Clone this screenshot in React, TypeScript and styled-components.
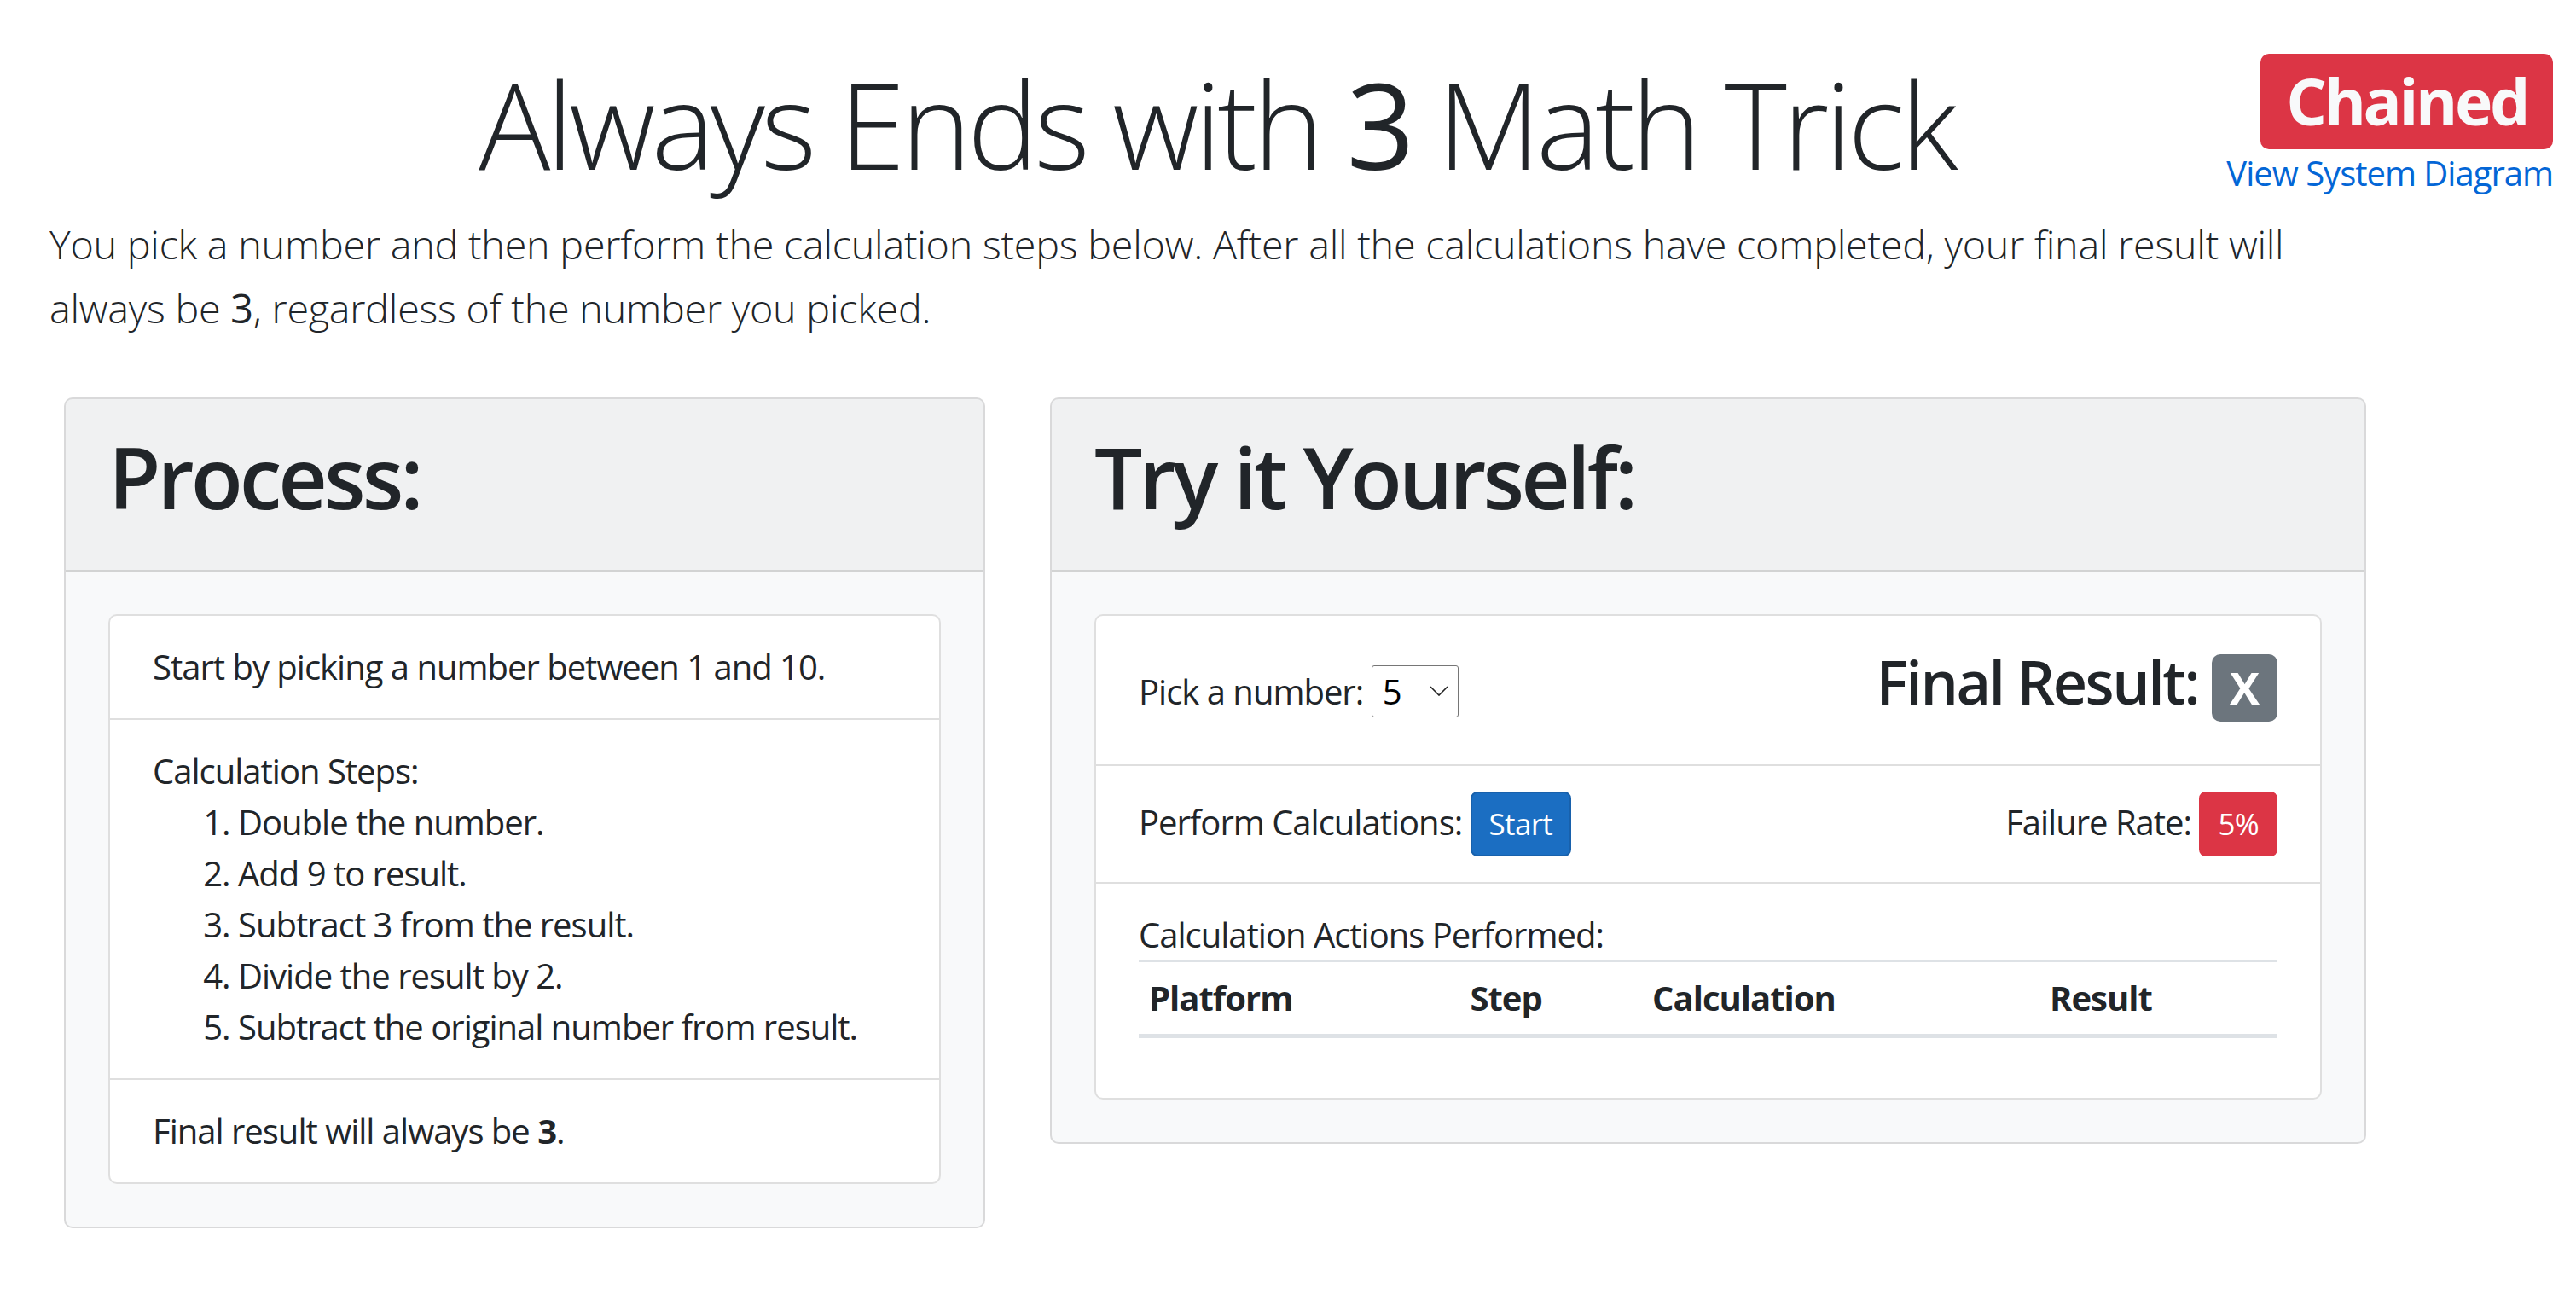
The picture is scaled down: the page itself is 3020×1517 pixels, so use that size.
import React from "react";
import styled, { createGlobalStyle } from "styled-components";

const GlobalStyle = createGlobalStyle`
  html, body { margin: 0; padding: 0; background: #ffffff; }
  body {
    font-family: "Open Sans", "Noto Sans", sans-serif;
    color: #212529;
    font-size: 40px;
    line-height: 60px;
    letter-spacing: -0.025em;
  }
  * { box-sizing: border-box; }
`;

const Page = styled.div`
  position: relative;
  width: 3020px;
  min-height: 1517px;
  padding-top: 61px;
`;

const Main = styled.header`
  display: flow-root;
  width: 2736px;
  margin-left: 58px;
`;

const Title = styled.h1`
  margin: 0 0 20px;
  font-size: 140px;
  line-height: 168px;
  font-weight: 300;
  text-align: center;
  letter-spacing: -0.035em;
`;

const Bolder = styled.b`
  font-weight: 400;
`;

const Lead = styled.p`
  margin: 0 0 40px;
  font-size: 46.7px;
  line-height: 75px;
  font-weight: 300;
  letter-spacing: -0.005em;
`;

const Aside = styled.div`
  position: absolute;
  top: 63px;
  right: 27px;
  display: flex;
  flex-direction: column;
  align-items: flex-end;
`;

const ChainedBadge = styled.span`
  display: inline-block;
  font-size: 75px;
  line-height: 1;
  font-weight: 700;
  padding: 18px 30px 19px;
  color: #f8f9fa;
  background: #dc3545;
  border-radius: 10px;
  letter-spacing: -0.045em;
`;

const DiagramLink = styled.a`
  margin-top: -2px;
  color: #0366d6;
  text-decoration: none;
  font-size: 40px;
  line-height: 60px;
`;

const CardRow = styled.main`
  display: flex;
  align-items: flex-start;
  gap: 76px;
  margin-top: 27px;
  padding-left: 75px;
`;

const Card = styled.section<{ $width: number }>`
  width: ${(p) => p.$width}px;
  background: #f8f9fa;
  border: 2px solid rgba(0, 0, 0, 0.125);
  border-radius: 10px;
`;

const CardHeader = styled.div`
  padding: 30px 50px;
  background: rgba(0, 0, 0, 0.03);
  border-bottom: 2px solid rgba(0, 0, 0, 0.125);
  border-radius: 8px 8px 0 0;
`;

const CardTitle = styled.h2`
  margin: 0 0 20px;
  font-size: 100px;
  line-height: 120px;
  font-weight: 600;
  letter-spacing: -0.04em;
`;

const CardBody = styled.div`
  padding: 50px;
`;

const ListCard = styled.div`
  background: #ffffff;
  border: 2px solid rgba(0, 0, 0, 0.125);
  border-radius: 10px;
`;

const ListItem = styled.div`
  padding: 30px 50px;
  & + & {
    border-top: 2px solid rgba(0, 0, 0, 0.125);
  }
`;

const StepList = styled.ol`
  margin: 0;
  padding-left: 100px;
`;

const Row = styled.div<{ $pad?: number }>`
  display: flex;
  justify-content: space-between;
  align-items: baseline;
  padding-top: ${(p) => p.$pad ?? 0}px;
`;

const Label = styled.span`
  white-space: nowrap;
`;

const SelectWrap = styled.span`
  position: relative;
  display: inline-block;
`;

const NumberSelect = styled.select`
  appearance: none;
  -webkit-appearance: none;
  width: 102px;
  height: 61px;
  padding: 0 12px;
  font-family: "Open Sans", sans-serif;
  font-size: 40px;
  color: #000000;
  background: #ffffff;
  border: 1px solid #767676;
  border-radius: 3px;
  vertical-align: baseline;
`;

const Chevron = styled.svg`
  position: absolute;
  right: 12px;
  top: 24px;
  width: 22px;
  height: 12px;
  pointer-events: none;
`;

const ResultHeading = styled.h3`
  margin: 0 0 20px;
  font-size: 70px;
  line-height: 84px;
  font-weight: 600;
  letter-spacing: -0.035em;
  white-space: nowrap;
`;

const ResultBadge = styled.span`
  display: inline-block;
  font-size: 52.5px;
  line-height: 1;
  font-weight: 700;
  padding: 13px 21px;
  color: #ffffff;
  background: #6c757d;
  border-radius: 10px;
  letter-spacing: 0;
`;

const SmallButton = styled.button<{ $tone: "primary" | "danger" }>`
  font-family: "Open Sans", sans-serif;
  font-size: 35px;
  line-height: 52.5px;
  padding: 10px 20px;
  color: #ffffff;
  background: ${(p) => (p.$tone === "primary" ? "#1b6ec2" : "#dc3545")};
  border: 2px solid ${(p) => (p.$tone === "primary" ? "#1861ac" : "#dc3545")};
  border-radius: 8px;
  letter-spacing: -0.02em;
  vertical-align: baseline;
`;

const ActionsTable = styled.table`
  width: 100%;
  margin-bottom: 40px;
  border-collapse: collapse;
`;

const HeadCell = styled.th<{ $w: string }>`
  width: ${(p) => p.$w};
  padding: 12px;
  text-align: left;
  vertical-align: bottom;
  font-weight: 700;
  border-top: 2px solid #dee2e6;
  border-bottom: 5px solid #dee2e6;
`;

export default function App() {
  return (
    <>
      <GlobalStyle />
      <Page>
        <Main>
          <Title>
            Always Ends with <Bolder>3</Bolder> Math Trick
          </Title>
          <Lead>
            You pick a number and then perform the calculation steps below. After all the
            calculations have completed, your final result will always be <Bolder>3</Bolder>,
            regardless of the number you picked.
          </Lead>
        </Main>
        <Aside>
          <ChainedBadge>Chained</ChainedBadge>
          <DiagramLink href="#">View System Diagram</DiagramLink>
        </Aside>
        <CardRow>
          <Card $width={1080}>
            <CardHeader>
              <CardTitle>Process:</CardTitle>
            </CardHeader>
            <CardBody>
              <ListCard>
                <ListItem>Start by picking a number between 1 and 10.</ListItem>
                <ListItem>
                  Calculation Steps:
                  <StepList>
                    <li>Double the number.</li>
                    <li>Add 9 to result.</li>
                    <li>Subtract 3 from the result.</li>
                    <li>Divide the result by 2.</li>
                    <li>Subtract the original number from result.</li>
                  </StepList>
                </ListItem>
                <ListItem>
                  Final result will always be <strong>3</strong>.
                </ListItem>
              </ListCard>
            </CardBody>
          </Card>
          <Card $width={1543}>
            <CardHeader>
              <CardTitle>Try it Yourself:</CardTitle>
            </CardHeader>
            <CardBody>
              <ListCard>
                <ListItem>
                  <Row $pad={5}>
                    <Label>
                      Pick a number:{" "}
                      <SelectWrap>
                        <NumberSelect defaultValue="5">
                          {Array.from({ length: 10 }, (_, i) => (
                            <option key={i + 1} value={String(i + 1)}>
                              {i + 1}
                            </option>
                          ))}
                        </NumberSelect>
                        <Chevron viewBox="0 0 22 12">
                          <polyline
                            points="1,1 11,11 21,1"
                            fill="none"
                            stroke="#222"
                            strokeWidth="1.6"
                          />
                        </Chevron>
                      </SelectWrap>
                    </Label>
                    <ResultHeading>
                      Final Result: <ResultBadge>X</ResultBadge>
                    </ResultHeading>
                  </Row>
                </ListItem>
                <ListItem>
                  <Row>
                    <Label>
                      Perform Calculations: <SmallButton $tone="primary">Start</SmallButton>
                    </Label>
                    <Label>
                      Failure Rate: <SmallButton $tone="danger">5%</SmallButton>
                    </Label>
                  </Row>
                </ListItem>
                <ListItem>
                  Calculation Actions Performed:
                  <ActionsTable>
                    <thead>
                      <tr>
                        <HeadCell $w="28.2%">Platform</HeadCell>
                        <HeadCell $w="16%">Step</HeadCell>
                        <HeadCell $w="34.9%">Calculation</HeadCell>
                        <HeadCell $w="20.9%">Result</HeadCell>
                      </tr>
                    </thead>
                    <tbody />
                  </ActionsTable>
                </ListItem>
              </ListCard>
            </CardBody>
          </Card>
        </CardRow>
      </Page>
    </>
  );
}
